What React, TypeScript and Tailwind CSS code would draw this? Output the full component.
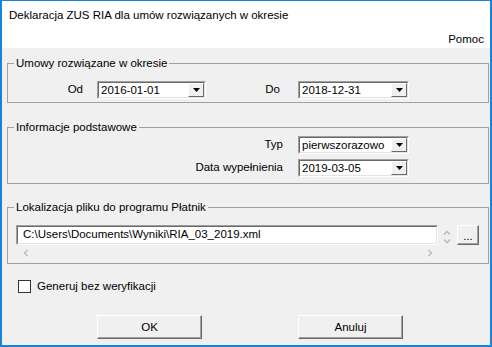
import React from "react";

const Arrow = () => (
  <svg width="7" height="4" viewBox="0 0 7 4">
    <polygon points="0,0 7,0 3.5,4" fill="#000" />
  </svg>
);

const Combo = ({ value, className }: { value: string; className: string }) => (
  <div className={`flex h-[18px] border border-t-[#a0a0a0] border-l-[#a0a0a0] border-b-white border-r-white ${className}`}>
    <div className="flex flex-1 border border-t-[#696969] border-l-[#696969] border-b-[#e3e3e3] border-r-[#e3e3e3] bg-white">
      <span className="flex-1 pl-[2px] leading-[14px] whitespace-nowrap overflow-hidden">{value}</span>
      <div className="flex w-[16px] items-center justify-center border border-t-white border-l-white border-b-[#696969] border-r-[#696969] bg-[#f0f0f0]">
        <Arrow />
      </div>
    </div>
  </div>
);

const Chevron = ({ d }: { d: string }) => (
  <svg width="8" height="8" viewBox="0 0 8 8">
    <path d={d} fill="none" stroke="#bdbdbd" strokeWidth="1.6" />
  </svg>
);

const Group = ({ title, className, children }: { title: string; className: string; children: React.ReactNode }) => (
  <fieldset className={`border border-[#a0a0a0] p-0 ${className}`}>
    <legend className="ml-[6px] px-[2px] leading-[14px]">{title}</legend>
    {children}
  </fieldset>
);

const WinButton = ({ label, className }: { label: string; className: string }) => (
  <div className={`flex h-[24px] w-[105px] items-center justify-center border border-t-white border-l-white border-b-[#696969] border-r-[#696969] bg-[#f0f0f0] shadow-[inset_-1px_-1px_0_#a0a0a0] ${className}`}>
    {label}
  </div>
);

const App = () => {
  return (
    <div
      className="flex h-[347px] w-[492px] flex-col border-x-2 border-b-2 border-t border-[#1883d7] bg-white text-[11.5px] text-black"
      style={{ fontFamily: '"Liberation Sans", Arial, sans-serif' }}
    >
      <div className="flex h-[30px] items-center pl-[7px]">
        Deklaracja ZUS RIA dla umów rozwiązanych w okresie
      </div>
      <div className="flex h-[17px] items-start justify-end pr-[6px] leading-[17px]">Pomoc</div>

      <div className="flex flex-1 flex-col bg-[#f0f0f0] pl-[5px] pr-[1px]">
        <Group title="Umowy rozwiązane w okresie" className="mt-[8px]">
          <div className="flex items-center pt-[11px] pb-[3px]">
            <span className="w-[75px] text-right">Od</span>
            <Combo value="2016-01-01" className="ml-[14px] w-[109px]" />
            <span className="w-[74px] text-right">Do</span>
            <Combo value="2018-12-31" className="ml-[18px] w-[111px]" />
          </div>
        </Group>

        <Group title="Informacje podstawowe" className="mt-[17px]">
          <div className="flex flex-col gap-[5px] pt-[2px] pb-[6px]">
            <div className="flex items-center">
              <span className="w-[275px] text-right">Typ</span>
              <Combo value="pierwszorazowo" className="ml-[15px] w-[111px]" />
            </div>
            <div className="flex items-center">
              <span className="w-[275px] text-right">Data wypełnienia</span>
              <Combo value="2019-03-05" className="ml-[15px] w-[111px]" />
            </div>
          </div>
        </Group>

        <Group title="Lokalizacja pliku do programu Płatnik" className="mt-[16px]">
          <div className="flex items-start pt-[11px] pb-[2px] pl-[8px]">
            <div className="flex w-[422px] flex-col">
              <div className="flex h-[20px] items-center border border-t-[#a0a0a0] border-l-[#a0a0a0] border-b-white border-r-white">
                <div className="flex h-full flex-1 items-center border border-t-[#696969] border-l-[#696969] border-b-[#e3e3e3] border-r-[#e3e3e3] bg-white pl-[5px] whitespace-nowrap">
                  C:\Users\Documents\Wyniki\RIA_03_2019.xml
                </div>
              </div>
              <div className="flex h-[16px] items-center justify-between pl-[6px] pr-[4px]">
                <Chevron d="M5.5,1 L2.5,4 L5.5,7" />
                <Chevron d="M2.5,1 L5.5,4 L2.5,7" />
              </div>
            </div>
            <div className="ml-[2px] flex w-[14px] flex-col items-center pt-[4px]">
              <Chevron d="M1,5.5 L4,2.5 L7,5.5" />
              <Chevron d="M1,2.5 L4,5.5 L7,2.5" />
            </div>
            <div className="ml-[3px] flex h-[20px] w-[22px] items-end justify-center border border-t-white border-l-white border-b-[#696969] border-r-[#696969] bg-[#f0f0f0] pb-[2px] leading-[12px] shadow-[inset_-1px_-1px_0_#a0a0a0]">
              ...
            </div>
          </div>
        </Group>

        <div className="ml-[11px] mt-[14px] flex items-center">
          <div className="h-[13px] w-[13px] border border-[#333333] bg-white" />
          <span className="ml-[6px]">Generuj bez weryfikacji</span>
        </div>

        <div className="mt-[20px] flex">
          <WinButton label="OK" className="ml-[90px]" />
          <WinButton label="Anuluj" className="ml-[96px]" />
        </div>
      </div>
    </div>
  );
};

export default App;
